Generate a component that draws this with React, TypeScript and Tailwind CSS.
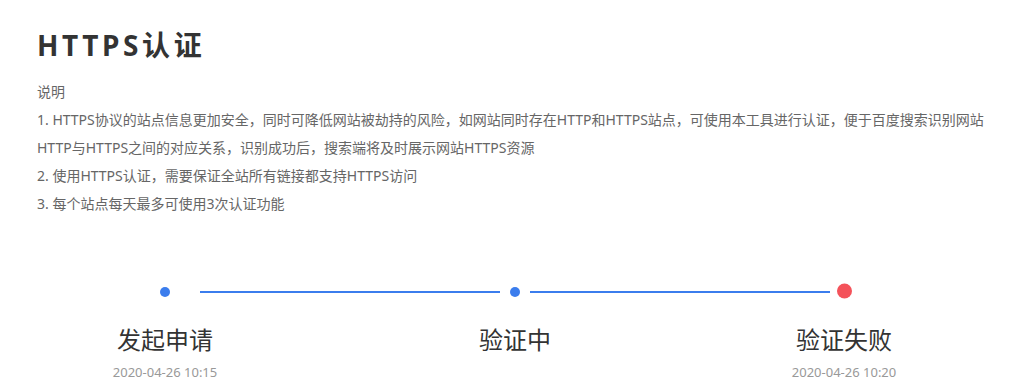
export default function App() {
  const font = { fontFamily: '"Noto Sans", "Noto Sans CJK SC", sans-serif' };

  return (
    <div className="w-[1035px] h-[392px] bg-white overflow-hidden" style={font}>
      <div className="pl-[37px] pt-[27px]">
        <h1 className="text-[28px] leading-[36px] font-bold tracking-[3.6px] text-[#333]">HTTPS认证</h1>
        <div className="mt-[15px] text-[14px] leading-[28px] text-[#666]">
          <p>说明</p>
          <p>1. HTTPS协议的站点信息更加安全，同时可降低网站被劫持的风险，如网站同时存在HTTP和HTTPS站点，可使用本工具进行认证，便于百度搜索识别网站</p>
          <p>HTTP与HTTPS之间的对应关系，识别成功后，搜索端将及时展示网站HTTPS资源</p>
          <p>2. 使用HTTPS认证，需要保证全站所有链接都支持HTTPS访问</p>
          <p>3. 每个站点每天最多可使用3次认证功能</p>
        </div>
      </div>

      {/* steps: dot row */}
      <div className="mt-[66px] flex items-center h-[16px]">
        <span className="ml-[160px] w-[10px] h-[10px] rounded-full bg-[#3b7ded]" />
        <span className="ml-[30px] w-[300px] h-[2px] bg-[#3b7ded]" />
        <span className="ml-[10px] w-[10px] h-[10px] rounded-full bg-[#3b7ded]" />
        <span className="ml-[10px] w-[300px] h-[2px] bg-[#3b7ded]" />
        <span className="ml-[7px] w-[15px] h-[15px] rounded-full bg-[#f4525a] -translate-y-[1.5px]" />
      </div>

      {/* steps: labels row */}
      <div className="mt-[25px] flex">
        <div className="ml-[65px] w-[200px] flex flex-col items-center">
          <span className="text-[24px] leading-[30px] text-[#333]">发起申请</span>
          <span className="mt-[9px] text-[13px] leading-[16px] text-[#999]">2020-04-26 10:15</span>
        </div>
        <div className="ml-[150px] w-[200px] flex flex-col items-center">
          <span className="text-[24px] leading-[30px] text-[#333]">验证中</span>
        </div>
        <div className="ml-[129px] w-[200px] flex flex-col items-center">
          <span className="text-[24px] leading-[30px] text-[#333]">验证失败</span>
          <span className="mt-[9px] text-[13px] leading-[16px] text-[#999]">2020-04-26 10:20</span>
        </div>
      </div>
    </div>
  );
}
